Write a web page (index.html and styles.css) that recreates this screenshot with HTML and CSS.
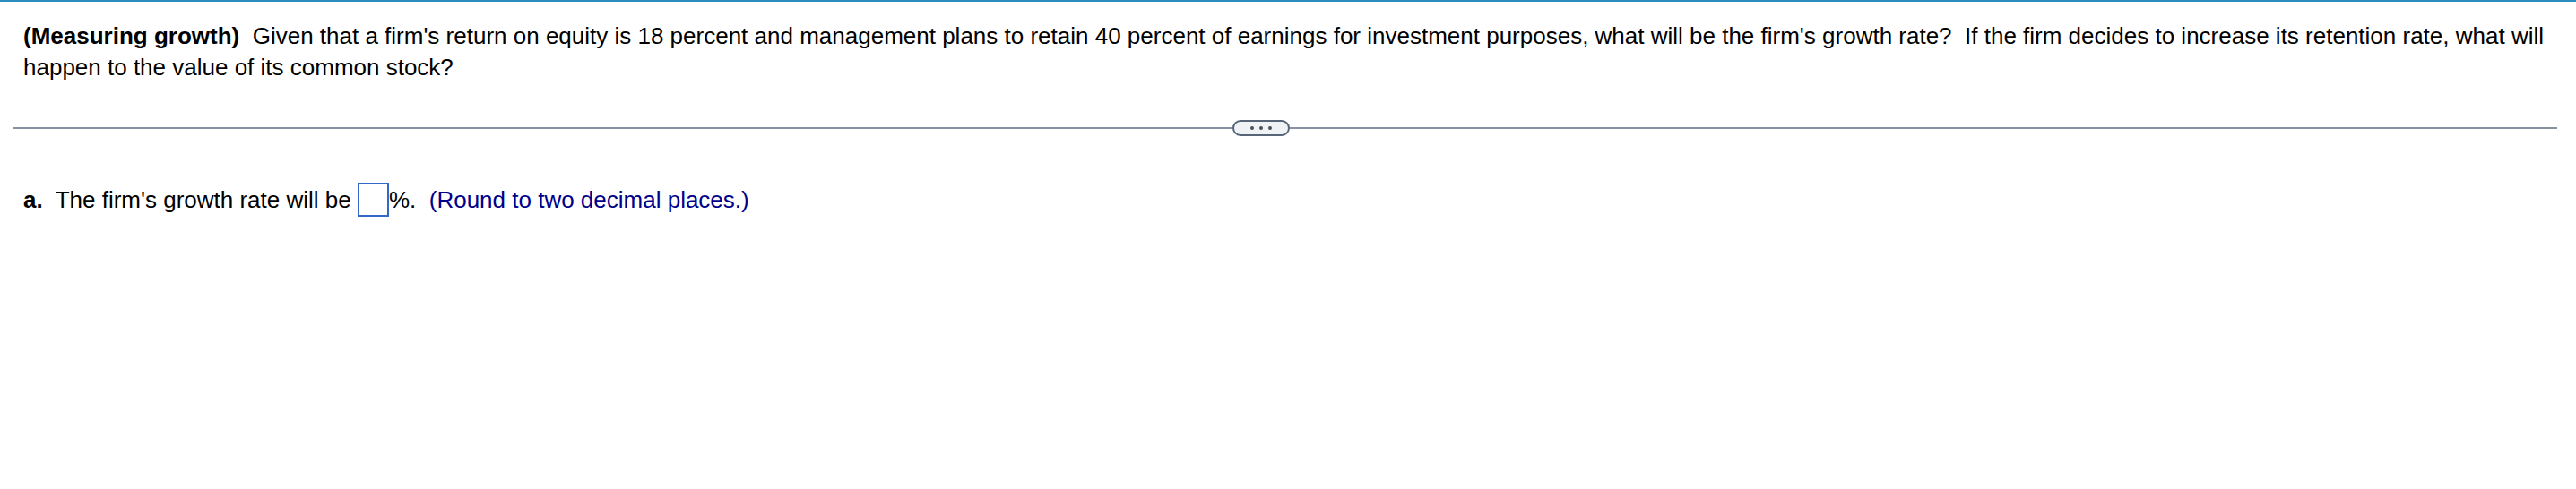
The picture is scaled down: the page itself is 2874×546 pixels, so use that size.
FILE: index.html
```html
<!DOCTYPE html>
<html>
<head>
<meta charset="utf-8">
<link rel="stylesheet" href="styles.css">
</head>
<body>
<div class="page">
  <div class="question">
    <p class="stem"><b>(Measuring growth)</b>&nbsp; Given that a firm's return on equity is 18 percent and management plans to retain 40 percent of earnings for investment purposes, what will be the firm's growth rate?&nbsp; If the firm decides to increase its retention rate, what will happen to the value of its common stock?</p>
  </div>
  <div class="divider">
    <div class="rule"></div>
    <div class="pill"><span class="dot"></span><span class="dot"></span><span class="dot"></span></div>
    <div class="rule"></div>
  </div>
  <div class="answer">
    <p class="part"><b>a.</b>&nbsp; The firm's growth rate will be <span class="box"></span>%.&nbsp; <span class="hint">(Round to two decimal places.)</span></p>
  </div>
</div>
</body>
</html>
```
FILE: styles.css
```css
html, body {
  margin: 0;
  padding: 0;
  background: #fff;
}
body {
  font-family: "Liberation Sans", Arial, sans-serif;
  font-size: 26px;
  color: #000;
}
.page {
  border-top: 2px solid #2a8dbf;
}
.question {
  padding: 21px 20px 0 26px;
}
.stem {
  margin: 0;
  line-height: 35px;
}
.divider {
  display: grid;
  grid-template-columns: 1360px auto 1fr;
  align-items: center;
  margin: 41px 21px 0 15px;
}
.rule {
  height: 2px;
  background: #8893a1;
}
.pill {
  width: 60px;
  height: 14px;
  border: 2px solid #566676;
  border-radius: 9px;
  background: #f0f3f5;
  display: flex;
  justify-content: center;
  align-items: center;
  gap: 6px;
}
.dot {
  width: 4px;
  height: 4px;
  border-radius: 50%;
  background: #4a4f55;
}
.answer {
  padding: 51px 20px 0 26px;
}
.part {
  margin: 0;
  line-height: 40px;
}
.box {
  display: inline-block;
  width: 31px;
  height: 34px;
  border: 2px solid #3468c8;
  vertical-align: -10px;
  box-sizing: content-box;
}
.hint {
  color: #00008b;
}
```
